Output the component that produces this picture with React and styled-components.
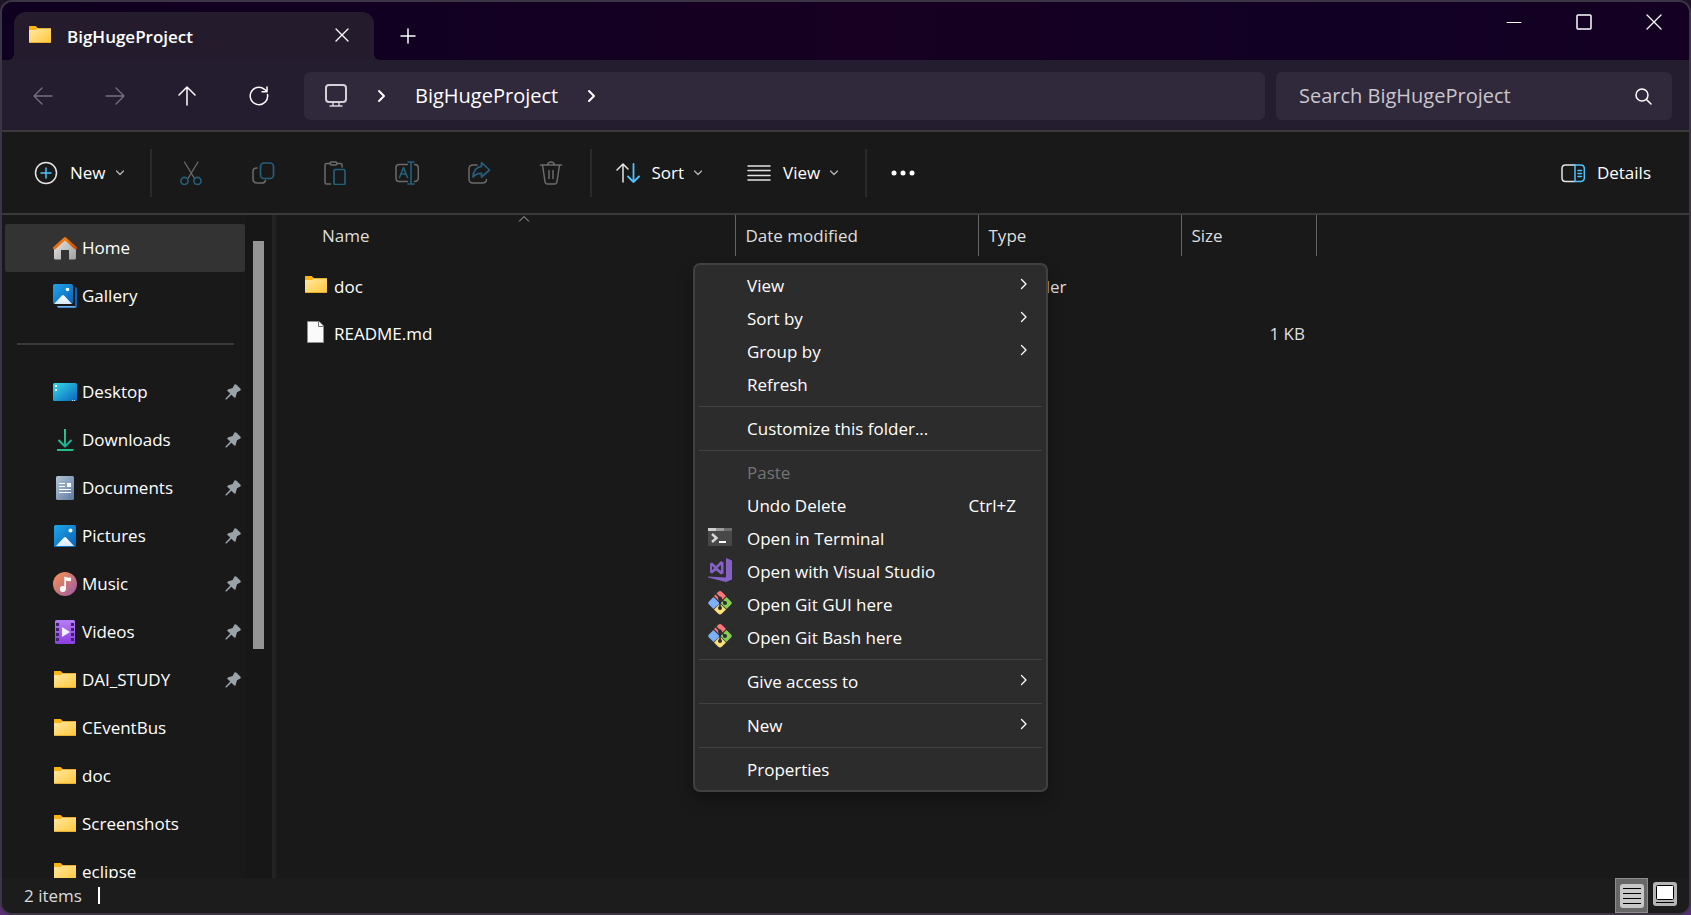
import React from "react";
import styled, { createGlobalStyle, css } from "styled-components";

const Global = createGlobalStyle`
  *, *::before, *::after { box-sizing: border-box; }
  body {
    margin: 0;
    background: linear-gradient(180deg, #1d1426 0%, #3a3048 55%, #5b2f78 100%);
    font-family: "Open Sans", "Noto Sans", sans-serif;
    font-size: 17px;
    line-height: 24px;
    color: #fff;
  }
  button, input { font: inherit; color: inherit; border: 0; margin: 0; padding: 0; background: none; }
  a { color: inherit; text-decoration: none; }
  svg { display: block; flex: none; }
`;

/* ---------- window frame ---------- */

const Window = styled.div`
  position: relative;
  display: flex;
  flex-direction: column;
  height: 100vh;
  overflow: hidden;
  border: 2px solid #3c3546;
  border-radius: 12px;
  background: #191919;
`;

const TitleBar = styled.header`
  display: flex;
  align-items: flex-start;
  justify-content: space-between;
  height: 58px;
  padding-left: 12px;
  background: linear-gradient(90deg, #10001f 0%, #120022 25%, #170021 52%, #120024 75%, #130023 100%);
`;

const TabStrip = styled.div`
  display: flex;
  align-items: flex-end;
  height: 58px;
`;

const Tab = styled.div`
  position: relative;
  display: flex;
  align-items: center;
  width: 360px;
  height: 48px;
  padding: 0 20px 2px 14px;
  border-radius: 12px 12px 0 0;
  background: #241c2d;

  &::before, &::after {
    content: "";
    position: absolute;
    bottom: 0;
    width: 6px;
    height: 6px;
  }
  &::before { right: 100%; background: radial-gradient(circle at 0 0, transparent 6px, #241c2d 6px); }
  &::after { left: 100%; background: radial-gradient(circle at 100% 0, transparent 6px, #241c2d 6px); }
`;

const TabTitle = styled.span`
  flex: 1;
  padding: 3px 0 0 15px;
  font-weight: 600;
`;

const IconButton = styled.button`
  display: flex;
  align-items: center;
  justify-content: center;
  width: ${(p) => p.$w}px;
  height: ${(p) => p.$h}px;
`;

const WindowControls = styled.div`
  display: flex;
`;

/* ---------- navigation row ---------- */

const NavBar = styled.div`
  display: flex;
  align-items: center;
  height: 70px;
  padding: 2px 17px 0 5px;
  gap: 11px;
  background: #241c2f;
`;

const NavButtons = styled.div`
  display: flex;
  margin-right: -2px;
`;

const AddressBar = styled.nav`
  display: flex;
  align-items: center;
  flex: 1;
  height: 48px;
  padding-left: 20px;
  border-radius: 6px;
  background: #30283b;
  font-size: 20px;
`;

const Crumb = styled.a`
  display: flex;
  align-items: center;
  height: 48px;
`;

const CrumbArrow = styled.button`
  display: flex;
  align-items: center;
  justify-content: center;
  width: 67px;
  height: 48px;
`;

const SearchBox = styled.label`
  display: flex;
  align-items: center;
  width: 396px;
  height: 48px;
  padding: 0 20px 0 23px;
  border-radius: 6px;
  background: #30283b;
  font-size: 20px;
`;

const SearchInput = styled.input`
  flex: 1;
  min-width: 0;
  outline: 0;
  &::placeholder { color: #c9c6cd; opacity: 1; }
`;

/* ---------- command bar ---------- */

const CommandBar = styled.div`
  display: flex;
  align-items: center;
  height: 85px;
  padding: 0 27px 0 24px;
  border-top: 2px solid #3a3a3a;
  border-bottom: 2px solid #3a3a3a;
`;

const Command = styled.button`
  display: flex;
  align-items: center;
  gap: 12px;
  height: 48px;
  padding: 0 ${(p) => p.$right || 0}px 0 ${(p) => p.$left || 0}px;
`;

const CommandText = styled.span`
  display: flex;
  align-items: center;
  gap: 10px;
`;

const Divider = styled.span`
  width: 2px;
  height: 48px;
  background: #2b2b2b;
`;

const Tools = styled.div`
  display: flex;
  padding: 0 3px;
`;

const Spacer = styled.span`
  flex: 1;
`;

/* ---------- main area ---------- */

const Main = styled.div`
  display: flex;
  flex: 1;
  min-height: 0;
`;

const Sidebar = styled.nav`
  width: 243px;
  padding: 9px 0 0 3px;
  overflow: hidden;
`;

const SideLink = styled.a`
  display: flex;
  align-items: center;
  height: 48px;
  padding: 0 4px 0 48px;
  border-radius: 2px;
  ${(p) => p.$active && css`background: #333;`}
  span { flex: 1; padding-left: 5px; white-space: nowrap; }
`;

const SideRule = styled.hr`
  height: 2px;
  margin: 23px 11px 23px 12px;
  border: 0;
  background: #3a3a3a;
`;

const ScrollTrack = styled.div`
  width: 27px;
  padding: 26px 8px 0;
  background: #171717;
`;

const ScrollThumb = styled.div`
  width: 11px;
  height: 64%;
  background: #959595;
`;

const Splitter = styled.div`
  width: 5px;
  background: #242424;
  border-right: 2px solid #1e1e1e;
`;

const FilePane = styled.main`
  flex: 1;
  min-width: 0;
  overflow: hidden;
`;

const FileTable = styled.table`
  width: 1039px;
  table-layout: fixed;
  border-collapse: collapse;
  color: #dedede;
  td { height: 47px; padding: 0 0 0 10px; }
`;

const HeadCell = styled.th`
  position: relative;
  width: ${(p) => p.$w}px;
  height: 41px;
  padding: 0 0 0 ${(p) => p.$left || 10}px;
  border-right: 1px solid #636363;
  text-align: left;
  font-weight: 400;
`;

const SortMark = styled.svg`
  position: absolute;
  top: 0;
  left: calc(50% + 12px);
`;

const GapRow = styled.tr`
  td { height: 7px; padding: 0; }
`;

const FileName = styled.span`
  display: flex;
  align-items: center;
  gap: 7px;
  padding-left: 18px;
  color: #fff;
  svg { margin-bottom: 3px; }
`;

const SizeCell = styled.td`
  text-align: right;
  && { padding-right: 11px; }
`;

/* ---------- context menu ---------- */

const Menu = styled.div`
  position: absolute;
  left: 691px;
  top: 261px;
  width: 355px;
  padding: 5px 4px 3px;
  border: 2px solid #404040;
  border-radius: 7px;
  background: #2c2c2c;
  box-shadow: 0 8px 16px rgba(0, 0, 0, 0.28);
`;

const MenuItem = styled.button`
  display: flex;
  align-items: center;
  width: 100%;
  height: 33px;
  padding: 0 14px 2px 9px;
  text-align: left;
  color: ${(p) => (p.disabled ? "#747474" : "#fff")};
`;

const MenuIcon = styled.span`
  width: 39px;
  height: 28px;
`;

const MenuLabel = styled.span`
  flex: 1;
`;

const Shortcut = styled.span`
  padding-right: 12px;
`;

const MenuRule = styled.hr`
  height: 1px;
  margin: 4px 0 6px;
  border: 0;
  background: #414141;
`;

/* ---------- status bar ---------- */

const StatusBar = styled.footer`
  display: flex;
  align-items: center;
  height: 35px;
  padding: 0 8px 0 22px;
  gap: 16px;
  background: #1c1c1c;
  color: #dcdcdc;
`;

const Caret = styled.span`
  width: 2px;
  height: 17px;
  background: #fff;
`;

const ViewSwitch = styled.div`
  display: flex;
  height: 35px;
`;

const ViewButton = styled.button`
  display: flex;
  align-items: center;
  justify-content: center;
  width: 33px;
  height: 35px;
  padding-bottom: ${(p) => (p.$on ? 0 : 3)}px;
  ${(p) => p.$on && css`background: #686868; border: 1px solid #8c8c8c;`}
`;

/* ---------- icons ---------- */

const Line = ({ w = 24, h = w, box, d, color = "#fff", sw = 1.5, children, ...rest }) => (
  <svg width={w} height={h} viewBox={box || `0 0 ${w} ${h}`} fill="none" stroke={color}
    strokeWidth={sw} strokeLinecap="round" strokeLinejoin="round" aria-hidden="true" {...rest}>
    {d && <path d={d} />}
    {children}
  </svg>
);

const Defs = () => (
  <svg width="0" height="0" style={{ position: "absolute" }} aria-hidden="true">
    <defs>
      <linearGradient id="folder" x1="0" y1="0" x2="1" y2="1">
        <stop offset="0" stopColor="#ffe9a6" /><stop offset="1" stopColor="#ffc738" />
      </linearGradient>
      <linearGradient id="blue" x1="0" y1="0" x2="1" y2="1">
        <stop offset="0" stopColor="#1fa5ea" /><stop offset="1" stopColor="#0862b5" />
      </linearGradient>
      <linearGradient id="desk" x1="0" y1="0" x2="1" y2="1">
        <stop offset="0" stopColor="#33dcea" /><stop offset="1" stopColor="#0a62bd" />
      </linearGradient>
      <linearGradient id="snow" x1="0" y1="0" x2="0" y2="1">
        <stop offset="0" stopColor="#fff" /><stop offset="1" stopColor="#d6e9fa" />
      </linearGradient>
      <linearGradient id="roof" x1="0" y1="0" x2="1" y2="1">
        <stop offset="0" stopColor="#fb8c14" /><stop offset="1" stopColor="#d24a04" />
      </linearGradient>
      <linearGradient id="wall" x1="0" y1="0" x2="1" y2="1">
        <stop offset="0" stopColor="#e8e8e8" /><stop offset="1" stopColor="#a0a0a0" />
      </linearGradient>
      <linearGradient id="paper" x1="0" y1="0" x2="1" y2="1">
        <stop offset="0" stopColor="#b3c5d8" /><stop offset="1" stopColor="#5c7ba0" />
      </linearGradient>
      <linearGradient id="disc" x1="0" y1="0" x2="1" y2="1">
        <stop offset="0.1" stopColor="#f28d56" /><stop offset="0.9" stopColor="#a45f9f" />
      </linearGradient>
      <linearGradient id="film" x1="0" y1="0" x2="0" y2="1">
        <stop offset="0" stopColor="#b67cf5" /><stop offset="1" stopColor="#8a40e0" />
      </linearGradient>
      <linearGradient id="down" gradientUnits="userSpaceOnUse" x1="4" y1="1" x2="20" y2="20">
        <stop offset="0" stopColor="#37cf84" /><stop offset="1" stopColor="#13a79c" />
      </linearGradient>
    </defs>
  </svg>
);

const Folder = ({ w = 24 }) => (
  <svg width={w} height="24" viewBox={w === 24 ? "0 0 24 24" : "1 0 22 24"} aria-hidden="true">
    <path d="M1 10V4Q1 3 2 3H7.500L9.500 5H22V8H1Z" fill="#fcb414" />
    <path d="M1 7H8L10 5H22Q23 5 23 6V19Q23 20 22 20H2Q1 20 1 19Z" fill="url(#folder)" />
    <path d="M1 3.500Q1.500 3 2.500 3H7.500L9.300 5L8 6.800H1Z" fill="#fcb414" />
    <path d="M1.500 19.500H22.500M10 5.500H22" stroke="#e8b032" />
  </svg>
);

const File = () => (
  <svg width="22" height="24" viewBox="0 0 22 24" aria-hidden="true">
    <path d="M2.500 1.500H14L18.500 6V22.500H2.500Z" fill="#fafafa" stroke="#8f8f8f" />
    <path d="M13.500 1.500V6.500H18.500" fill="#fff" stroke="#6e6e6e" />
  </svg>
);

const Home = () => (
  <svg width="24" height="24" viewBox="0 0 24 24" aria-hidden="true">
    <path d="M1 11L12 2L23 11V22Q23 23.500 21.500 23.500H16V14H8V23.500H2.500Q1 23.500 1 22Z" fill="url(#wall)" />
    <path d="M1.500 12L12 2.500L22.500 12" fill="none" stroke="url(#roof)" strokeWidth="3" strokeLinecap="round" strokeLinejoin="round" />
  </svg>
);

const Gallery = () => (
  <svg width="24" height="24" viewBox="0 0 24 24" aria-hidden="true">
    <path d="M22 3Q24 3 24 5V22Q24 24 22 24H6Q4 24 4 22H22Z" fill="#0f64b8" />
    <path d="M4 22H22L23 23.500H6Q4.500 23.500 4 22Z" fill="#74aee6" />
    <path d="M20 0H21.500V21.500H2V20H20Z" fill="#191919" />
    <rect width="20" height="20" rx="2" fill="url(#blue)" />
    <path d="M1 20L9 11.500Q10 10.500 11 11.500L19 20Z" fill="url(#snow)" />
    <circle cx="14.500" cy="5.500" r="1.800" fill="#fff" />
  </svg>
);

const Desktop = () => (
  <svg width="24" height="24" viewBox="0 0 24 24" aria-hidden="true">
    <rect y="3" width="24" height="18" rx="1.500" fill="url(#desk)" />
    <path d="M2 5h2v2H2zM2 9h2v2H2z" fill="#fff" />
    <path d="M19 20h1v1h-1zM21 20h1v1h-1z" fill="#cfe6fb" />
  </svg>
);

const Downloads = () => (
  <Line color="url(#down)" sw={2} strokeLinecap="butt">
    <path d="M12 1V18M5.500 12L12 18.500L18.500 12" /><path d="M4 22H20.010V22.010" stroke="#25bd8e" />
  </Line>
);

const Documents = () => (
  <svg width="24" height="24" viewBox="0 0 24 24" aria-hidden="true">
    <rect x="3" width="18" height="24" rx="1.500" fill="url(#paper)" />
    <path d="M6 7.500H12M6 10.500H12M6 13.500H18M6 16.500H18" stroke="#fff" />
    <rect x="14" y="7" width="4" height="4" fill="#fff" />
  </svg>
);

const Pictures = () => (
  <svg width="24" height="24" viewBox="0 0 24 24" aria-hidden="true">
    <rect x="1" y="1" width="22" height="22" rx="1.500" fill="url(#blue)" />
    <path d="M3 22L11 13.500Q12 12.500 13 13.500L21 22Z" fill="url(#snow)" />
    <circle cx="17.500" cy="6.500" r="2" fill="#fff" />
  </svg>
);

const Music = () => (
  <svg width="24" height="24" viewBox="0 0 24 24" aria-hidden="true">
    <circle cx="12" cy="12" r="12" fill="url(#disc)" />
    <circle cx="9.800" cy="17" r="3" fill="#fff" />
    <path d="M11.300 17V4.500Q14 6 18 5.500V9Q15 9.500 13 8.500V17Z" fill="#fff" />
  </svg>
);

const Videos = () => (
  <svg width="24" height="24" viewBox="0 0 24 24" aria-hidden="true">
    <rect x="2" width="20" height="24" rx="1.500" fill="url(#film)" />
    <path d="M3 3h3v3H3zM3 8h3v3H3zM3 13h3v3H3zM3 18h3v3H3zM18 3h3v3h-3zM18 8h3v3h-3zM18 13h3v3h-3zM18 18h3v3h-3z" fill="#43206e" />
    <path d="M9 7L17 12L9 17Z" fill="#f4eefc" />
  </svg>
);

const Pin = () => (
  <svg width="16" height="16" viewBox="0 0 16 16" fill="#98a2a8" aria-hidden="true">
    <path d="M9.500 0.500Q10.500 -0.300 11.500 0.700L15.300 4.500Q16.200 5.500 15.300 6.500L12 8.300L10.600 13.200Q10 14.200 9 13.300L6.300 10.700L1.500 15.500H0.500V14.500L5.200 9.600L2.500 6.900Q1.800 6 2.900 5.400L7.600 4Z" />
  </svg>
);

const Chevron = () => <Line w={8} h={6} d="M0.500 1L4 4.500L7.500 1" color="#b4b4b4" sw={1.300} />;
const CrumbChevron = () => <Line w={10} h={14} d="M2 2L7 7L2 12" sw={2} />;
const MenuChevron = () => <Line w={8} h={12} d="M1.500 1.500L6 6L1.500 10.500" sw={1.300} style={{ marginBottom: 4 }} />;

const GREY = "#6b6b6b";
const TEAL = "#23607d";

const Cut = () => (
  <Line color={GREY} sw={1.300}><path d="M5.500 1L15.500 17.500M19 1L9 17.500" />
    <g stroke={TEAL} strokeWidth="1.600"><circle cx="5.500" cy="20" r="3.600" /><circle cx="18.500" cy="20" r="3.600" /></g></Line>
);
const Copy = () => (
  <Line color={GREY}><path d="M6 7Q2 7 2 10.500V18Q2 22 6 22H11Q14 22 14.500 19.500" />
    <rect x="9.500" y="2" width="13" height="15.500" rx="3.500" stroke={TEAL} strokeWidth="1.700" /></Line>
);
const Paste = () => (
  <Line color={GREY}><path d="M7 2.500H3.500Q2 2.500 2 4V21.500Q2 23 3.500 23H7.500M14 2.500H17.500Q19 2.500 19 4V6" />
    <rect x="7" y="1" width="7" height="3" rx="1.500" />
    <rect x="11" y="8.500" width="11" height="15" rx="1.500" stroke={TEAL} strokeWidth="1.700" /></Line>
);
const Rename = () => (
  <Line color={GREY}><path d="M12.500 3.500H4Q1 3.500 1 6.500V17Q1 20.500 4 20.500H12.500M19.500 3.500Q23.300 3.500 23.300 7V17Q23.300 20.500 19.500 20.500" />
    <g stroke={TEAL} strokeWidth="1.600"><path d="M4.500 16.500L8.500 6.500L12.500 16.500M6 13H11M16 1V23M13 1H19M13 23H19" /></g></Line>
);
const Share = () => (
  <Line color={GREY}><path d="M10 4H6Q2 4 2 8V18Q2 22 6 22H15Q19.500 22 19.500 18.500" />
    <path d="M14.500 1.500L22.500 9L14.500 16V12.300Q9.500 12 6 16Q6.500 6.500 14.500 5.500Z" stroke={TEAL} strokeWidth="1.700" /></Line>
);
const Trash = () => (
  <Line color={GREY} d="M1.500 4H22.500M3.500 4L6 20.500Q6.300 23 8.500 23H15.500Q17.700 23 18 20.500L20.500 4M8.500 4Q9 1 12 1Q15 1 15.500 4M10 9.500V17.500M14 9.500V17.500" />
);

const TerminalIcon = () => (
  <svg width="24" height="24" viewBox="0 0 24 24" aria-hidden="true">
    <rect y="3" width="24" height="18" rx="1" fill="#484848" />
    <path d="M0 3H8V6H0Z" fill="#cfcfcf" /><path d="M8 3H16V6H8Z" fill="#9b9b9b" /><path d="M16 3H24V6H16Z" fill="#6c6c6c" />
    <path d="M4 9L8.500 13L4 17" fill="none" stroke="#d8d8d8" strokeWidth="2.400" />
    <path d="M11 17H18" stroke="#fff" strokeWidth="2" />
  </svg>
);
const VisualStudio = () => (
  <svg width="24" height="24" viewBox="0 0 24 24" fill="#8661c5" aria-hidden="true">
    <path fillRule="evenodd" d="M18 0L24 2.500V21.500L18 24L0 19.500V18.500L18 19.500Z M2 5.500L4 4.500L8 8L13 3L15.500 4.500V15.500L13 16.500L8 12.500L4 15.500L2 14.500Z M4 8V12L6.300 10Z M13 7L9.500 10L13 13Z" />
  </svg>
);
const Git = () => (
  <svg width="24" height="24" viewBox="0 0 24 24" aria-hidden="true">
    <path d="M12 0Q13 0 14 1L18 5L13.500 9.500H10.500L6 5L10 1Q11 0 12 0Z" fill="#f87777" />
    <path d="M5.500 6L11 11.500V13L5.500 18L1 13.500Q-0.500 12 1 10.500Z" fill="#7db0fb" />
    <path d="M18.500 6L23 10.500Q24.500 12 23 13.500L18.500 18L13 12.500V11.500Z" fill="#87cf57" />
    <path d="M12 12.500L18 18.500L14 22.500Q12 24.500 10 22.500L6 18.500Z" fill="#fbe07a" />
    <g stroke="#2c2c2c" fill="none" strokeWidth="1.500"><path d="M7.500 2.500L12 7V17M12 7L17 12" /></g>
    <g fill="#2c2c2c"><circle cx="12" cy="7.500" r="2" /><circle cx="12" cy="17" r="2" /><circle cx="17" cy="12" r="2" /></g>
  </svg>
);

/* ---------- data ---------- */

const PINNED = [
  ["Desktop", Desktop, true],
  ["Downloads", Downloads, true],
  ["Documents", Documents, true],
  ["Pictures", Pictures, true],
  ["Music", Music, true],
  ["Videos", Videos, true],
  ["DAI_STUDY", Folder, true],
  ["CEventBus", Folder],
  ["doc", Folder],
  ["Screenshots", Folder],
  ["eclipse", Folder],
];

const TOOLS = [
  ["Cut", Cut], ["Copy", Copy], ["Paste", Paste],
  ["Rename", Rename], ["Share", Share], ["Delete", Trash],
];

const MENU = [
  [{ label: "View", sub: true }, { label: "Sort by", sub: true }, { label: "Group by", sub: true }, { label: "Refresh" }],
  [{ label: "Customize this folder..." }],
  [
    { label: "Paste", disabled: true },
    { label: "Undo Delete", keys: "Ctrl+Z" },
    { label: "Open in Terminal", Icon: TerminalIcon },
    { label: "Open with Visual Studio", Icon: VisualStudio },
    { label: "Open Git GUI here", Icon: Git },
    { label: "Open Git Bash here", Icon: Git },
  ],
  [{ label: "Give access to", sub: true }],
  [{ label: "New", sub: true }],
  [{ label: "Properties" }],
];

const SidebarEntry = ({ label, Icon, pinned, active }) => (
  <SideLink href="#" $active={active}>
    <Icon />
    <span>{label}</span>
    {pinned && <Pin />}
  </SideLink>
);

export default function App() {
  return (
    <>
      <Global />
      <Defs />
      <Window>
        <TitleBar>
          <TabStrip>
            <Tab>
              <Folder />
              <TabTitle>BigHugeProject</TabTitle>
              <IconButton $w={24} $h={24} aria-label="Close tab"><Line w={14} d="M1 1L13 13M13 1L1 13" sw={1.3} /></IconButton>
            </Tab>
            <IconButton $w={68} $h={48} aria-label="New tab"><Line w={16} d="M8 1V15M1 8H15" /></IconButton>
          </TabStrip>
          <WindowControls>
            <IconButton $w={70} $h={40} aria-label="Minimize"><Line w={16} d="M1 8.500H15" sw={1} /></IconButton>
            <IconButton $w={70} $h={40} aria-label="Maximize"><Line w={16}><rect x="1" y="1" width="14" height="14" rx="1" /></Line></IconButton>
            <IconButton $w={70} $h={40} aria-label="Close"><Line w={16} d="M1 1L15 15M15 1L1 15" sw={1.3} /></IconButton>
          </WindowControls>
        </TitleBar>

        <NavBar>
          <NavButtons>
            <IconButton $w={72} $h={48} aria-label="Back"><Line w={20} d="M19 10H1M9 2L1 10L9 18" color="#77717f" sw={1.3} /></IconButton>
            <IconButton $w={72} $h={48} aria-label="Forward"><Line w={20} d="M1 10H19M11 2L19 10L11 18" color="#77717f" sw={1.3} /></IconButton>
            <IconButton $w={72} $h={48} aria-label="Up"><Line w={20} d="M10 19V1M2 9L10 1L18 9" /></IconButton>
            <IconButton $w={72} $h={48} aria-label="Refresh"><Line w={20} d="M18.500 8.500A8.700 8.700 0 1 1 15.500 3.300L18 5.500M18 1V5.800H13" /></IconButton>
          </NavButtons>
          <AddressBar aria-label="Address">
            <Crumb href="#" aria-label="This PC">
              <Line w={24} color="#d4d1d8" sw={2}>
                <rect x="2" y="1" width="20" height="17" rx="3" /><path d="M9 18V22M15 18V22M6 22H18" strokeWidth="1.500" />
              </Line>
            </Crumb>
            <CrumbArrow aria-label="Show folders"><CrumbChevron /></CrumbArrow>
            <Crumb href="#">BigHugeProject</Crumb>
            <CrumbArrow aria-label="Show subfolders"><CrumbChevron /></CrumbArrow>
          </AddressBar>
          <SearchBox>
            <SearchInput type="text" aria-label="Search" placeholder="Search BigHugeProject" />
            <Line w={17}><circle cx="7" cy="7" r="6" /><path d="M11.500 11.500L16 16" /></Line>
          </SearchBox>
        </NavBar>

        <CommandBar>
          <Command $left={8} $right={26}>
            <Line w={24} color="#e4e4e4"><circle cx="12" cy="12" r="10.500" /><path d="M12 7V17M7 12H17" stroke="#4cc2ff" /></Line>
            <CommandText>New <Chevron /></CommandText>
          </Command>
          <Divider />
          <Tools>
            {TOOLS.map(([label, Icon]) => (
              <IconButton key={label} $w={72} $h={48} disabled aria-label={label}><Icon /></IconButton>
            ))}
          </Tools>
          <Divider />
          <Command $left={24} $right={21}>
            <Line w={24} color="#e4e4e4"><path d="M7 21V3M1 9L7 3L12 8" /><path d="M17.500 3V21M12 15.500L17.500 21L23 15.500" stroke="#4cc2ff" strokeWidth="1.800" /></Line>
            <CommandText>Sort <Chevron /></CommandText>
          </Command>
          <Command $left={24} $right={27}>
            <Line w={24} color="#e4e4e4" d="M1 5H23M1 9.500H23M1 14.500H23M1 19H23" />
            <CommandText>View <Chevron /></CommandText>
          </Command>
          <Divider />
          <IconButton $w={72} $h={48} aria-label="See more">
            <svg width="24" height="6" viewBox="0 0 24 6" fill="#fff"><circle cx="3" cy="3" r="2.500" /><circle cx="12" cy="3" r="2.500" /><circle cx="21" cy="3" r="2.500" /></svg>
          </IconButton>
          <Spacer />
          <Command $left={12} $right={11}>
            <Line w={24} color="#e4e4e4"><path d="M14 4H4.500Q1 4 1 7.500V17Q1 20.500 4.500 20.500H14" />
              <g stroke="#4cc2ff"><path d="M14 4H19.500Q23.300 4 23.300 7.500V17Q23.300 20.500 19.500 20.500H14ZM17 9.500H20.500M17 12.500H20.500M17 15.500H20.500" /></g></Line>
            Details
          </Command>
        </CommandBar>

        <Main>
          <Sidebar aria-label="Folders">
            <SidebarEntry label="Home" Icon={Home} active />
            <SidebarEntry label="Gallery" Icon={Gallery} />
            <SideRule />
            {PINNED.map(([label, Icon, pinned]) => (
              <SidebarEntry key={label} label={label} Icon={Icon} pinned={pinned} />
            ))}
          </Sidebar>
          <ScrollTrack><ScrollThumb /></ScrollTrack>
          <Splitter />
          <FilePane>
            <FileTable>
              <thead>
                <tr>
                  <HeadCell $w={458} $left={45}>
                    Name
                    <SortMark width="12" height="7" viewBox="0 0 12 7" fill="none" stroke="#b4b4b4"><path d="M1 6.500L6 1.500L11 6.500" /></SortMark>
                  </HeadCell>
                  <HeadCell $w={243}>Date modified</HeadCell>
                  <HeadCell $w={203}>Type</HeadCell>
                  <HeadCell $w={135}>Size</HeadCell>
                </tr>
              </thead>
              <tbody>
                <GapRow><td colSpan={4} /></GapRow>
                <tr>
                  <td><FileName><Folder w={22} />doc</FileName></td>
                  <td />
                  <td>File folder</td>
                  <td />
                </tr>
                <tr>
                  <td><FileName><File />README.md</FileName></td>
                  <td />
                  <td />
                  <SizeCell>1 KB</SizeCell>
                </tr>
              </tbody>
            </FileTable>
          </FilePane>
        </Main>

        <StatusBar>
          <span>2 items</span>
          <Caret />
          <Spacer />
          <ViewSwitch>
            <ViewButton $on aria-label="Details view">
              <svg width="24" height="24" viewBox="0 0 24 24"><rect width="24" height="24" rx="3" fill="#c8c8c8" /><path d="M3 4.500H21M3 9.500H21M3 14.500H21M3 19.500H21" stroke="#000" /></svg>
            </ViewButton>
            <ViewButton aria-label="Thumbnail view">
              <svg width="24" height="24" viewBox="0 0 24 24"><rect width="24" height="24" rx="3" fill="#b4b4b4" /><rect x="3.500" y="3.500" width="17" height="14" rx="1" fill="#fff" stroke="#000" /><path d="M3 20.500H21" stroke="#000" /></svg>
            </ViewButton>
          </ViewSwitch>
        </StatusBar>

        <Menu role="menu">
          {MENU.map((group, g) => (
            <React.Fragment key={g}>
              {g > 0 && <MenuRule />}
              {group.map(({ label, sub, keys, Icon, disabled }) => (
                <MenuItem key={label} role="menuitem" disabled={disabled}>
                  <MenuIcon>{Icon && <Icon />}</MenuIcon>
                  <MenuLabel>{label}</MenuLabel>
                  {keys && <Shortcut>{keys}</Shortcut>}
                  {sub && <MenuChevron />}
                </MenuItem>
              ))}
            </React.Fragment>
          ))}
        </Menu>
      </Window>
    </>
  );
}
